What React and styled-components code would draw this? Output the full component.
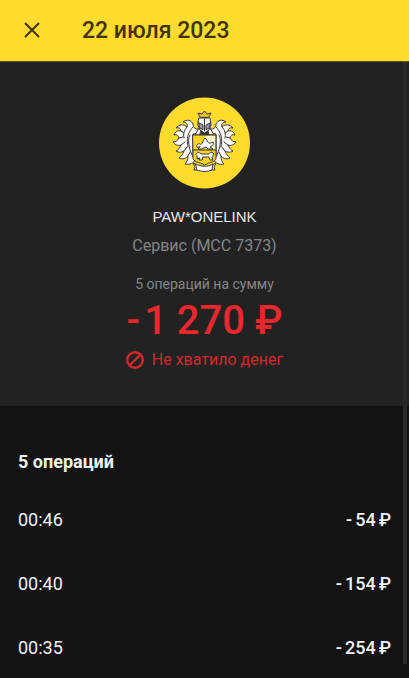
import React from 'react';
import styled, { createGlobalStyle } from 'styled-components';

const GlobalStyle = createGlobalStyle`
  * {
    box-sizing: border-box;
  }

  body {
    margin: 0;
    background: #131313;
    color: #f2f2f2;
    font-family: Roboto, "Noto Sans", sans-serif;
  }
`;

const Screen = styled.div`
  height: 100vh;
  display: flex;
  flex-direction: column;
  overflow: hidden;
`;

const TopBar = styled.header`
  display: flex;
  align-items: center;
  flex: none;
  gap: 32px;
  height: 62px;
  padding: 0 14px;
  background: #ffdb2d;
  border-bottom: 1px solid #5c4f14;
  color: #40330f;
`;

const CloseButton = styled.button`
  display: flex;
  align-items: center;
  justify-content: center;
  width: 36px;
  height: 36px;
  padding: 0;
  border: 0;
  background: none;
  color: inherit;
  cursor: pointer;
`;

const Title = styled.h1`
  margin: 0;
  font-size: 23px;
  font-weight: 500;
  line-height: 28px;
`;

const Content = styled.main`
  position: relative;
  flex: 1;
  min-height: 0;
`;

const ScrollThumb = styled.div`
  position: absolute;
  top: 0;
  right: 2px;
  bottom: 14px;
  width: 4px;
  background: #2a2a2a;
`;

const Summary = styled.section`
  display: flex;
  flex-direction: column;
  align-items: center;
  padding: 35px 16px 36px;
  background: #222222;
`;

const Logo = styled.svg`
  display: block;
  width: 92px;
  height: 92px;
`;

const Merchant = styled.h2`
  margin: 18px 0 0;
  color: #e8e8e8;
  font-family: "Liberation Sans", Arial, sans-serif;
  font-size: 15px;
  font-weight: 400;
  line-height: 20px;
`;

const Caption = styled.p`
  margin: ${(props) => (props.$small ? '18px' : '9px')} 0 0;
  color: #868686;
  font-size: ${(props) => (props.$small ? '14px' : '16px')};
  line-height: 20px;
`;

const Total = styled.p`
  display: flex;
  gap: 4px;
  margin: 3px 0 0;
  color: #e8282c;
  font-size: 40px;
  font-weight: 500;
  line-height: 48px;
`;

const Status = styled.p`
  display: flex;
  align-items: center;
  gap: 8px;
  margin: 5px 0 0;
  color: #d5282b;
  font-size: 16px;
  line-height: 20px;
`;

const Operations = styled.section`
  padding: 44px 18px 0;
`;

const SectionTitle = styled.h3`
  margin: 0 0 14px;
  font-size: 18px;
  font-weight: 700;
  line-height: 24px;
`;

const List = styled.ul`
  margin: 0;
  padding: 0;
  list-style: none;
`;

const Row = styled.li`
  display: flex;
  align-items: center;
  justify-content: space-between;
  height: 64px;
  font-size: 18px;
  line-height: 24px;
`;

const Amount = styled.span`
  display: flex;
  gap: 3px;
  font-weight: 500;
`;

const operations = [
  { time: '00:46', amount: '54' },
  { time: '00:40', amount: '154' },
  { time: '00:35', amount: '254' },
];

const CloseIcon = () => (
  <svg width="18" height="18" viewBox="0 0 18 18" fill="none" stroke="currentColor" strokeWidth="2" aria-hidden="true">
    <path d="M2 1L16 15M16 1L2 15" />
  </svg>
);

const DeniedIcon = () => (
  <svg width="18" height="18" viewBox="0 0 18 18" fill="none" stroke="currentColor" strokeWidth="2.4" aria-hidden="true">
    <circle cx="9" cy="9" r="7.8" />
    <path d="M14 4L4 14" />
  </svg>
);

// Left half of the mantling, mirrored for the right half
const Mantle = () => (
  <>
    <path
      fill="#fff"
      d="M41 32C37 33 34 31 34 27C32 23 28 22 24 25C27 25 29 27 28 30C25 27 20 27 17 31C20 30 22 32 22 34C19 33 16 35 15 38C18 37 20 39 20 41C19 43 17 45 14 45C16 48 19 49 22 48C21 51 19 53 17 54C20 56 23 55 25 54C24 57 22 59 20 61C24 63 27 61 29 59C29 63 28 65 26 67C31 68 35 66 36 63L34 57V37L41 36Z"
    />
    <path d="M34 30C29 35 27 42 29 50M28 30C25 33 24 37 25 41M31 38C28 43 30 52 34 60M22 48L26 45M25 54L28 50M29 59L31 55M20 41L24 40M22 34L25 36" />
  </>
);

const Crest = () => (
  <Logo viewBox="0 0 92 92" role="img" aria-label="Герб">
    <circle cx="45.5" cy="46" r="45.5" fill="#ffdb2d" />
    <g stroke="#34343f" strokeWidth="1" strokeLinejoin="round" strokeLinecap="round" fill="none">
      <Mantle />
      <g transform="matrix(-1 0 0 1 91 0)">
        <Mantle />
      </g>
      {/* collar */}
      <path fill="#fff" d="M40 31L36 38H55L51 31Z" />
      <path fill="#34343f" d="M42 34H49L50 38L45.5 41L41 38Z" />
      {/* helmet and crown */}
      <path fill="#fff" d="M40 21H51L52 28L50 33L45.5 36L41 33L39 28Z" />
      <path fill="#9a9aa8" d="M40 26L44 28V33L41 31ZM51 26L47 28V33L50 31Z" />
      <path d="M45.5 22V34" />
      <path fill="#f4c51f" d="M41 20L39 16L43 17L45.5 14L48 17L52 16L50 20Z" />
      {/* shield */}
      <path fill="#ffd51d" d="M34 38H57V61C57 65 51 65 45.5 68C40 65 34 65 34 61Z" />
      <path fill="#fff7d0" stroke="none" d="M46 39H56V52H46Z" />
      <path d="M34 53H57" />
      <path fill="#fff" d="M38 50C37 48 39 46 41 47C43 49 44 43 46 41L48 43C48 46 51 47 54 45C55 48 53 49 51 50L54 52H49L47 50L43 52H39L41 50Z" />
      <path fill="#fff" d="M37 57C38 55 41 55 42 57H49C51 57 51 55 53 55L55 57L53 60L54 63H51L50 60H44L43 63H40L41 61L38 62V59Z" />
      {/* ribbon */}
      <path fill="#fff" d="M38 68L34 66L36 70L35 73L39 73M53 68L57 66L55 70L56 73L52 73" />
      <path fill="#fff" d="M37 67C42 70 49 70 54 67L53 73C48 75 43 75 38 73Z" />
    </g>
  </Logo>
);

const App = () => {
  return (
    <>
      <GlobalStyle />
      <Screen>
        <TopBar>
          <CloseButton type="button" aria-label="Закрыть">
            <CloseIcon />
          </CloseButton>
          <Title>22 июля 2023</Title>
        </TopBar>

        <Content>
          <Summary>
            <Crest />
            <Merchant>PAW*ONELINK</Merchant>
            <Caption>Сервис (MCC 7373)</Caption>
            <Caption $small>5 операций на сумму</Caption>
            <Total>
              <span>-</span>
              <span>1 270 ₽</span>
            </Total>
            <Status>
              <DeniedIcon />
              Не хватило денег
            </Status>
          </Summary>

          <Operations>
            <SectionTitle>5 операций</SectionTitle>
            <List>
              {operations.map((item) => (
                <Row key={item.time}>
                  <span>{item.time}</span>
                  <Amount>
                    <span>-</span>
                    <span>{item.amount}</span>
                    <span>₽</span>
                  </Amount>
                </Row>
              ))}
            </List>
          </Operations>
          <ScrollThumb />
        </Content>
      </Screen>
    </>
  );
};

export default App;
